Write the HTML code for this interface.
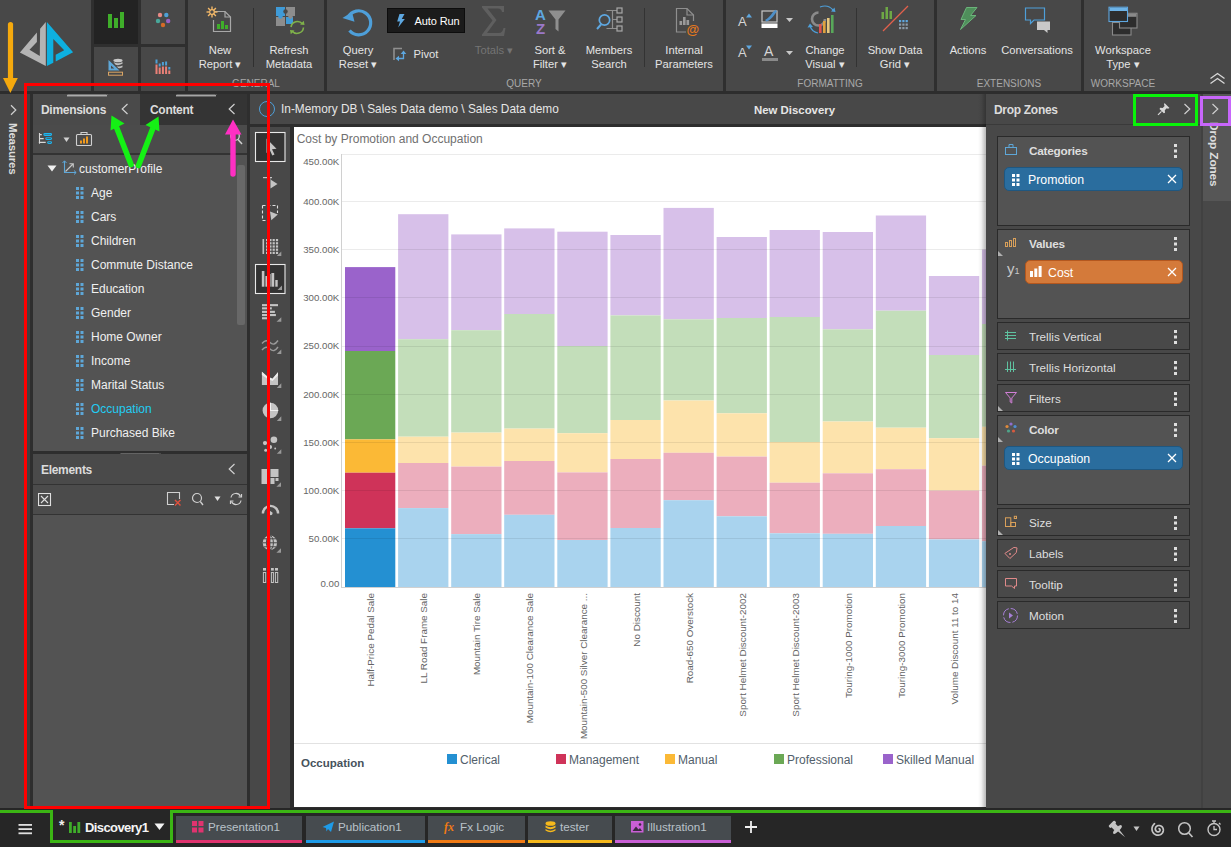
<!DOCTYPE html>
<html><head><meta charset="utf-8"><title>Discovery</title>
<style>
*{box-sizing:border-box;margin:0;padding:0}
html,body{width:1231px;height:847px;overflow:hidden;background:#2e2e2e;font-family:"Liberation Sans",sans-serif;color:#e6e6e6}
.abs{position:absolute}
#ribbon{position:absolute;left:0;top:0;width:1231px;height:91px;background:#484848}
.vsep{position:absolute;top:0;height:91px;width:3px;background:#2f2f2f}
.tile{position:absolute;width:44px;height:44px;background:#484848}
.rl{position:absolute;font-size:11.200px;line-height:14px;color:#e4e4e4;text-align:center;white-space:nowrap;transform:translateX(-50%)}
.grp{position:absolute;top:78px;font-size:10px;color:#a9a9a9;transform:translateX(-50%);white-space:nowrap}
.hdr{position:absolute;top:94px;height:30px;background:#484848}
.ptitle{position:absolute;font-weight:bold;font-size:12px;letter-spacing:-.3px;color:#dcdcdc;white-space:nowrap}
.tree{position:absolute;font-size:12px;color:#f0f0f0;white-space:nowrap}
.dz{position:absolute;left:997px;width:193px;background:#484848;border:1px solid #2a2a2a}
.dzt{position:absolute;left:31px;top:7px;font-size:11.700px;color:#dedede;white-space:nowrap}
.dzt.b{font-weight:bold;font-size:11.800px;letter-spacing:-.25px;top:7px}
.dots{position:absolute;right:12px;top:6.500px;width:3px;height:15px}
.chip{position:absolute;left:6px;width:179px;height:24px;border-radius:5px;font-size:12.300px;color:#fff;line-height:24px;padding-left:23px}
.tab{position:absolute;top:816px;height:27px;background:#464b4f;font-size:13px;color:#b9c2c9;line-height:22px;white-space:nowrap}
</style></head><body>
<!--RIBBON-->
<div id="ribbon">
 <!-- logo -->
 <svg class="abs" style="left:0;top:0" width="91" height="91" viewBox="0 0 91 91">
  <path d="M45.8 22.1 L40.1 28.7 L39.8 56.1 L29.5 49.7 L36.9 41.9 L36.9 32.5 L19.9 52.6 L45.8 66 Z" fill="#b4b4b4"/>
  <path d="M46.9 22.1 L73.1 52.2 L55.7 61.4 L55.7 54.7 L64.2 50.2 L53.3 39 L53.3 62.7 L46.9 66 Z" fill="#0eb0e0"/>
 </svg>
 <div class="vsep" style="left:91px"></div>
 <div class="vsep" style="left:138px"></div>
 <div class="vsep" style="left:185px"></div>
 <div class="abs" style="left:91px;top:44px;width:97px;height:3px;background:#2f2f2f"></div>
 <div class="tile" style="left:94px;top:0;background:#232323"></div>
 <!-- tile icons -->
 <svg class="abs" style="left:94px;top:0" width="44" height="44"><rect x="14" y="14" width="4" height="14" fill="#3fae2a"/><rect x="20" y="18" width="4" height="10" fill="#3fae2a"/><rect x="26" y="12" width="4" height="16" fill="#3fae2a"/></svg>
 <svg class="abs" style="left:141px;top:0" width="44" height="44"><circle cx="19" cy="15" r="2.2" fill="#e88a85"/><circle cx="25.3" cy="15" r="2.2" fill="#4ea0d6"/><circle cx="17" cy="21" r="2.2" fill="#49a89b"/><circle cx="27.2" cy="21" r="2.2" fill="#9a5fc4"/><circle cx="22" cy="25" r="2.2" fill="#d66a28"/></svg>
 <svg class="abs" style="left:94px;top:47px" width="44" height="44"><path d="M14.5 13 L14.5 23.5 L25.5 23.5 Z M17 18.5 L17 21.5 L20.3 21.5 Z" fill="#5ea7d8" fill-rule="evenodd"/><ellipse cx="24" cy="13.5" rx="4.6" ry="1.8" fill="#c9c9c9"/><path d="M19.5 15 Q24 17.5 28.5 15 L28.5 16.7 Q24 19 21.3 17.6 Z M22.5 19 Q25 20.3 28.5 18.4 L28.5 20.2 Q26 21.5 24.2 21 Z" fill="#bdbdbd"/><rect x="14.5" y="25.2" width="14" height="3" fill="none" stroke="#d9a566" stroke-width="1"/></svg>
 <svg class="abs" style="left:141px;top:47px" width="44" height="44"><g fill="#4ea0d6"><rect x="14.5" y="12.5" width="2" height="4"/><rect x="17.7" y="16.5" width="2" height="3"/><rect x="20.9" y="15" width="2" height="3.5"/><rect x="24.1" y="14.5" width="2" height="4"/><rect x="27.3" y="20" width="2" height="2.5"/></g><g fill="#ea8077"><rect x="14.5" y="17.5" width="2" height="9.5"/><rect x="17.7" y="20.5" width="2" height="6.5"/><rect x="20.9" y="19.5" width="2" height="7.5"/><rect x="24.1" y="19.5" width="2" height="7.5"/><rect x="27.3" y="23.5" width="2" height="3.5"/></g></svg>

 <!-- GENERAL -->
 <svg class="abs" style="left:204px;top:4px" width="32" height="32" viewBox="0 0 32 32"><path d="M10.5 7.5 L21 7.5 L26.5 13 L26.5 27.5 L9.5 27.5 L9.5 16" fill="none" stroke="#a8a8a8" stroke-width="1.2"/><path d="M21 7.5 L21 13 L26.5 13" fill="none" stroke="#a8a8a8" stroke-width="1.2"/><rect x="13" y="20" width="3" height="5" fill="#3fae2a"/><rect x="17" y="17" width="3" height="8" fill="#3fae2a"/><rect x="21" y="21" width="3" height="4" fill="#3fae2a"/><g stroke="#f3b868" stroke-width="1.400"><line x1="8" y1="2.5" x2="8" y2="13.5"/><line x1="2.5" y1="8" x2="13.5" y2="8"/><line x1="4.1" y1="4.1" x2="11.9" y2="11.9"/><line x1="11.9" y1="4.1" x2="4.1" y2="11.9"/></g><circle cx="8" cy="8" r="2.3" fill="#484848" stroke="#f3b868" stroke-width="1.200"/></svg>
 <div class="rl" style="left:220px;top:43px">New<br>Report ▾</div>
 <div class="abs" style="left:253px;top:8px;width:1px;height:59px;background:#303030"></div>
 <svg class="abs" style="left:274px;top:5px" width="32" height="32" viewBox="0 0 32 32"><rect x="2" y="2" width="9" height="9" fill="#3f9bd8"/><rect x="12" y="2" width="9" height="9" fill="#8d8d8d"/><rect x="2" y="12" width="9" height="9" fill="#8d8d8d"/><rect x="12" y="12" width="7" height="7" fill="#3f9bd8"/><circle cx="11.5" cy="6.5" r="2.2" fill="#484848"/><circle cx="6.5" cy="11.5" r="2.2" fill="#3f9bd8"/><circle cx="16.5" cy="11.5" r="2.2" fill="#8d8d8d"/><path d="M17 22 A6.5 6.5 0 0 1 28.5 19" fill="none" stroke="#7fb24a" stroke-width="1.6"/><path d="M29.5 22.5 A6.5 6.5 0 0 1 18 26" fill="none" stroke="#7fb24a" stroke-width="1.6"/><path d="M26 19.5 L30.5 20 L29.8 15.8 Z" fill="#7fb24a"/><path d="M20.5 25.5 L16 25 L16.8 29.2 Z" fill="#7fb24a"/></svg>
 <div class="rl" style="left:289px;top:43px">Refresh<br>Metadata</div>
 <div class="grp" style="left:256px">GENERAL</div>
 <div class="vsep" style="left:324px"></div>

 <!-- QUERY -->
 <svg class="abs" style="left:340px;top:3px" width="38" height="38" viewBox="0 0 38 38"><path d="M8.200 14 A12 12 0 1 1 9.500 27.500" fill="none" stroke="#4e9fd9" stroke-width="3.200"/><path d="M2.500 15 L14.500 18.800 L12 9 Z" fill="#4e9fd9"/></svg>
 <div class="rl" style="left:358px;top:43px">Query<br>Reset ▾</div>
 <div class="abs" style="left:387px;top:8px;width:78px;height:25px;background:#1b1b1b;border:1px solid #0d0d0d"></div>
 <svg class="abs" style="left:396px;top:14px" width="10" height="14"><path d="M3.500 0 L8.500 0 L5.800 5 L8.800 5 L2.200 13.500 L4 7.500 L1.200 7.500 Z" fill="#5da7e0"/></svg>
 <div class="abs" style="left:414.500px;top:14.500px;font-size:11px;color:#fff;white-space:nowrap;letter-spacing:-.1px">Auto Run</div>
 <svg class="abs" style="left:392px;top:46px" width="16" height="16"><path d="M2 14 V2.5 H10" fill="none" stroke="#8f8f8f" stroke-width="1.6"/><path d="M6 12.5 H11.5 V7" fill="none" stroke="#5da7e0" stroke-width="1.3"/><path d="M8.7 8 L11.5 4.5 L14.3 8 Z" fill="#5da7e0"/><path d="M7 9.7 L3.5 12.5 L7 15.3 Z" fill="#5da7e0"/></svg>
 <div class="abs" style="left:413.500px;top:47.500px;font-size:11.200px;color:#e4e4e4">Pivot</div>
 <svg class="abs" style="left:478px;top:4px" width="32" height="34"><path d="M4 2 H26 V8 H24 Q23.5 4.5 20 4.5 H9.5 L18.5 16 L9 29 H21 Q24.5 29 25.5 24 H27.5 L26 32 H4 V30.5 L14.5 16.5 L4 3.5 Z" fill="#5f5f5f"/></svg>
 <div class="rl" style="left:494px;top:43px;color:#747474">Totals ▾</div>
 <svg class="abs" style="left:532px;top:4px" width="36" height="34"><text x="3" y="16" font-family="Liberation Sans" font-weight="bold" font-size="15" fill="#5ea7e0">A</text><text x="4" y="30" font-family="Liberation Sans" font-weight="bold" font-size="15" fill="#9a78c8">Z</text><path d="M16.500 6.500 H33.500 L26.500 15.500 V27.500 L23.500 25 V15.500 Z" fill="#8f8f8f"/></svg>
 <div class="rl" style="left:550px;top:43px">Sort &amp;<br>Filter ▾</div>
 <svg class="abs" style="left:594px;top:4px" width="32" height="32"><circle cx="10.500" cy="16" r="5.200" fill="none" stroke="#5ea7e0" stroke-width="1.700"/><line x1="7" y1="20.500" x2="3" y2="25" stroke="#5ea7e0" stroke-width="2"/><path d="M12.500 6.500 H23 M18.500 6.500 V24.500 M12.500 24.500 H23 M18.500 15.500 H23" fill="none" stroke="#8f8f8f" stroke-width="1.200"/><rect x="23" y="4" width="5" height="5" fill="#484848" stroke="#a8a8a8" stroke-width="1.200"/><rect x="23" y="13" width="5" height="5" fill="#484848" stroke="#a8a8a8" stroke-width="1.200"/><rect x="23" y="22" width="5" height="5" fill="#484848" stroke="#a8a8a8" stroke-width="1.200"/></svg>
 <div class="rl" style="left:609px;top:43px">Members<br>Search</div>
 <div class="abs" style="left:644px;top:8px;width:1px;height:59px;background:#333"></div>
 <svg class="abs" style="left:668px;top:4px" width="34" height="34"><path d="M18 28 H8.5 V4.5 H19 L25.5 11 V17" fill="none" stroke="#8f8f8f" stroke-width="1.2"/><path d="M19 4.5 V11 H25.5" fill="none" stroke="#8f8f8f" stroke-width="1.2"/><rect x="11.5" y="17" width="2.6" height="4" fill="#9a9a9a"/><rect x="15" y="13" width="2.6" height="8" fill="#9a9a9a"/><rect x="18.5" y="16" width="2.6" height="5" fill="#9a9a9a"/><text x="18.5" y="30" font-family="Liberation Sans" font-weight="bold" font-size="13" fill="#e5791e">@</text></svg>
 <div class="rl" style="left:684px;top:43px">Internal<br>Parameters</div>
 <div class="grp" style="left:524px">QUERY</div>
 <div class="vsep" style="left:723px"></div>

 <!-- FORMATTING -->
 <div class="abs" style="left:738px;top:14px;font-size:13px;color:#d6d6d6">A</div>
 <svg class="abs" style="left:746px;top:13px" width="6" height="5"><path d="M0 4.5 L3 0.5 L6 4.5 Z" fill="#5ea7e0"/></svg>
 <div class="abs" style="left:738px;top:45px;font-size:13px;color:#d6d6d6">A</div>
 <svg class="abs" style="left:746px;top:45px" width="6" height="5"><path d="M0 0.5 L3 4.5 L6 0.5 Z" fill="#5ea7e0"/></svg>
 <svg class="abs" style="left:761px;top:9px" width="18" height="20"><rect x="1" y="2" width="15" height="11" fill="none" stroke="#c8c8c8" stroke-width="1.2"/><path d="M4 11 Q8 9 12 3 L14.5 0.8 L16 2.2 L14 5 Q10 11 5.5 12.5 Z" fill="#4e8fc7"/><rect x="0.5" y="14.5" width="16" height="4.5" fill="#fff"/></svg>
 <svg class="abs" style="left:786px;top:18px" width="8" height="5"><path d="M0 0 L7 0 L3.5 4 Z" fill="#c8c8c8"/></svg>
 <div class="abs" style="left:764px;top:43px;font-size:14px;color:#d6d6d6">A</div>
 <div class="abs" style="left:762px;top:58px;width:16px;height:3px;background:#8a8a8a"></div>
 <svg class="abs" style="left:786px;top:51px" width="8" height="5"><path d="M0 0 L7 0 L3.5 4 Z" fill="#c8c8c8"/></svg>
 <svg class="abs" style="left:806px;top:4px" width="36" height="34"><path d="M12.5 8.5 A6.5 6.5 0 1 0 19 15" fill="none" stroke="#8a8a8a" stroke-width="2.6"/><path d="M14 3 Q22 0 27 6" fill="none" stroke="#4e9fd9" stroke-width="1.2"/><path d="M25 7.5 L29.5 8 L28.5 3.5 Z" fill="#4e9fd9"/><path d="M4 22 Q6 28 12 29" fill="none" stroke="#4e9fd9" stroke-width="1.2"/><path d="M1.5 23.5 L4 19.5 L7 23 Z" fill="#4e9fd9"/><rect x="13" y="20" width="2.6" height="9" fill="#e0524f"/><rect x="17" y="17" width="2.6" height="12" fill="#e0a23e"/><rect x="21" y="14" width="2.6" height="15" fill="#e8c77d"/><rect x="25" y="11" width="2.6" height="18" fill="#58a85a"/></svg>
 <div class="rl" style="left:825px;top:43px">Change<br>Visual ▾</div>
 <div class="abs" style="left:856px;top:8px;width:1px;height:59px;background:#333"></div>
 <svg class="abs" style="left:878px;top:4px" width="36" height="32"><rect x="3.5" y="8" width="2.5" height="7" fill="#6ea845"/><rect x="7.5" y="3" width="2.5" height="12" fill="#6ea845"/><rect x="11.5" y="7" width="2.5" height="8" fill="#6ea845"/><line x1="5" y1="27" x2="30" y2="2" stroke="#e2604c" stroke-width="1.2"/><g fill="#8a9aa8"><rect x="21" y="16" width="2.2" height="2.2" fill="#5ea7e0"/><rect x="24.3" y="16" width="2.2" height="2.2" fill="#5ea7e0"/><rect x="27.6" y="16" width="2.2" height="2.2" fill="#5ea7e0"/><rect x="21" y="19.5" width="2.2" height="2.2"/><rect x="24.3" y="19.5" width="2.2" height="2.2"/><rect x="27.6" y="19.5" width="2.2" height="2.2"/><rect x="21" y="23" width="2.2" height="2.2"/><rect x="24.3" y="23" width="2.2" height="2.2"/><rect x="27.6" y="23" width="2.2" height="2.2"/></g></svg>
 <div class="rl" style="left:895px;top:43px">Show Data<br>Grid ▾</div>
 <div class="grp" style="left:830px">FORMATTING</div>
 <div class="vsep" style="left:934px"></div>

 <!-- EXTENSIONS -->
 <svg class="abs" style="left:956px;top:4px" width="26" height="30"><path d="M10.5 3.5 L21 3.5 L14.5 11.5 L20 11.5 L4.5 25.5 L9.5 15.5 L5 15.5 Z" fill="#4f8f5b" stroke="#6bb47a" stroke-width="1"/></svg>
 <div class="rl" style="left:968px;top:43px">Actions</div>
 <svg class="abs" style="left:1022px;top:4px" width="32" height="30"><path d="M3.5 4 H22.500 V16 H12 L8.5 19.500 V16 H3.500 Z" fill="none" stroke="#4e9fd9" stroke-width="1.2"/><path d="M15 17.5 H28 V26 H25.5 V29 L22 26 H15 Z" fill="#c9c9c9"/></svg>
 <div class="rl" style="left:1037px;top:43px">Conversations</div>
 <div class="grp" style="left:1009px">EXTENSIONS</div>
 <div class="vsep" style="left:1081px"></div>

 <!-- WORKSPACE -->
 <svg class="abs" style="left:1106px;top:4px" width="34" height="34"><rect x="6.500" y="18.500" width="18.500" height="12.500" fill="#2d2d2d" stroke="#8a8a8a" stroke-width="1.100"/><rect x="13.500" y="9.300" width="17.500" height="14.700" fill="#2d2d2d" stroke="#8a8a8a" stroke-width="1.100"/><rect x="14" y="9.800" width="16.500" height="3" fill="#8a8a8a"/><rect x="3" y="3.200" width="18.500" height="14.300" fill="#2d2d2d" stroke="#5ea7e0" stroke-width="1.100"/><rect x="3.500" y="3.700" width="17.500" height="3.300" fill="#6db3e6"/></svg>
 <div class="rl" style="left:1123px;top:43px">Workspace<br>Type ▾</div>
 <div class="grp" style="left:1123px">WORKSPACE</div>
 <svg class="abs" style="left:1209px;top:72px" width="18" height="14"><path d="M1.5 6.500 L8.500 1.500 L15.500 6.500 M1.500 11.500 L8.500 6.500 L15.500 11.500" fill="none" stroke="#d8d8d8" stroke-width="1.3"/></svg>
</div>

<!--HEADER-->
<!-- ribbon bottom dark line -->
<div class="abs" style="left:0;top:91px;width:1231px;height:3px;background:#2d2d2d"></div>
<!-- Measures strip -->
<div class="abs" style="left:0;top:94px;width:27px;height:714px;background:#484848"></div>
<div class="abs" style="left:27px;top:94px;width:3px;height:714px;background:#404040"></div>
<div class="abs" style="left:30px;top:94px;width:3px;height:714px;background:#2e2e2e"></div>
<svg class="abs" style="left:8px;top:103px" width="10" height="14"><path d="M3 2.300 L7.800 7 L3 11.700" fill="none" stroke="#d0d0d0" stroke-width="1.2"/></svg>
<div class="abs" style="left:19px;top:123px;font-size:11.500px;font-weight:bold;color:#dcdcdc;transform-origin:0 0;transform:rotate(90deg);white-space:nowrap;letter-spacing:-.2px">Measures</div>
<!-- Left panel -->
<div class="abs" style="left:33px;top:94px;width:214px;height:31px;background:#4a4a4a"></div>
<div class="abs" style="left:140px;top:94px;width:107px;height:31px;background:#343434"></div>
<div class="abs" style="left:33px;top:125px;width:214px;height:29px;background:#4b4b4b"></div>
<div class="abs" style="left:33px;top:153px;width:214px;height:2px;background:#333"></div>
<div class="abs" style="left:33px;top:155px;width:214px;height:296px;background:#535353"></div>
<div class="abs" style="left:237px;top:165px;width:8px;height:160px;background:#686868;border-radius:2px"></div>
<div class="ptitle" style="left:41px;top:103px">Dimensions</div>
<div class="ptitle" style="left:150px;top:103px">Content</div>
<svg class="abs" style="left:120px;top:102px" width="10" height="14"><path d="M7.500 2 L2.200 7 L7.500 12" fill="none" stroke="#d0d0d0" stroke-width="1.2"/></svg>
<svg class="abs" style="left:227px;top:102px" width="10" height="14"><path d="M7.500 2 L2.200 7 L7.500 12" fill="none" stroke="#d0d0d0" stroke-width="1.2"/></svg>
<!-- grip marks -->
<svg class="abs" style="left:67px;top:94px" width="41" height="3"><path d="M0 0.500 L1 2.500 L2 0.500 L3 2.500 L4 0.500 L5 2.500 L6 0.500 L7 2.500 L8 0.500 L9 2.500 L10 0.500 L11 2.500 L12 0.500 L13 2.500 L14 0.500 L15 2.500 L16 0.500 L17 2.500 L18 0.500 L19 2.500 L20 0.500 L21 2.500 L22 0.500 L23 2.500 L24 0.500 L25 2.500 L26 0.500 L27 2.500 L28 0.500 L29 2.500 L30 0.500 L31 2.500 L32 0.500 L33 2.500 L34 0.500 L35 2.500 L36 0.500 L37 2.500 L38 0.500 L39 2.500 L40 0.500" fill="none" stroke="#c4c4c4" stroke-width=".800"/></svg>
<svg class="abs" style="left:176px;top:94px" width="41" height="3"><path d="M0 0.500 L1 2.500 L2 0.500 L3 2.500 L4 0.500 L5 2.500 L6 0.500 L7 2.500 L8 0.500 L9 2.500 L10 0.500 L11 2.500 L12 0.500 L13 2.500 L14 0.500 L15 2.500 L16 0.500 L17 2.500 L18 0.500 L19 2.500 L20 0.500 L21 2.500 L22 0.500 L23 2.500 L24 0.500 L25 2.500 L26 0.500 L27 2.500 L28 0.500 L29 2.500 L30 0.500 L31 2.500 L32 0.500 L33 2.500 L34 0.500 L35 2.500 L36 0.500 L37 2.500 L38 0.500 L39 2.500 L40 0.500" fill="none" stroke="#c4c4c4" stroke-width=".800"/></svg>
<!-- toolbar icons -->
<svg class="abs" style="left:38px;top:131px" width="18" height="16"><path d="M1.500 2.100 V12.800 M1.500 3.600 H3.800 M1.500 7.600 H5.700 M0.800 11.400 H7.700" fill="none" stroke="#d8d8d8" stroke-width="1.100"/><rect x="5.900" y="2.600" width="7.600" height="1.800" rx=".9" fill="none" stroke="#19b8f5" stroke-width="1.100"/><rect x="7.800" y="6.700" width="5.700" height="1.800" rx=".9" fill="none" stroke="#19b8f5" stroke-width="1.100"/><rect x="9.700" y="10.700" width="3.800" height="1.800" rx=".9" fill="none" stroke="#19b8f5" stroke-width="1.100"/></svg>
<svg class="abs" style="left:62.500px;top:137px" width="8" height="6"><path d="M0.500 0.500 H6.500 L3.500 5 Z" fill="#d0d0d0"/></svg>
<svg class="abs" style="left:75px;top:130px" width="18" height="17"><rect x="1.500" y="4.500" width="15" height="11" rx="1" fill="none" stroke="#d0d0d0" stroke-width="1.100"/><path d="M6 4.500 V2.500 H12 V4.500" fill="none" stroke="#d0d0d0" stroke-width="1.100"/><rect x="5" y="10.500" width="2" height="3" fill="#f09a1e"/><rect x="8" y="8.500" width="2" height="5" fill="#f09a1e"/><rect x="11" y="6.500" width="2" height="7" fill="#f09a1e"/></svg>
<svg class="abs" style="left:229px;top:130px" width="16" height="16"><circle cx="6" cy="6" r="4.300" fill="none" stroke="#d0d0d0" stroke-width="1.300"/><line x1="9" y1="9.500" x2="13" y2="14" stroke="#d0d0d0" stroke-width="1.500"/></svg>
<!-- tree -->
<svg class="abs" style="left:47px;top:165px" width="10" height="8"><path d="M0.500 0.500 H9.500 L5 6.500 Z" fill="#f0f0f0"/></svg>
<svg class="abs" style="left:61px;top:160px" width="16" height="16"><path d="M3.500 1 V12.500 H15" fill="none" stroke="#5ea7d8" stroke-width="1.100"/><path d="M1.500 3 L3.500 0.800 L5.500 3 M13 10.500 L15.200 12.500 L13 14.500" fill="none" stroke="#5ea7d8" stroke-width="1"/><path d="M4.500 11.500 L12 4 M8.500 3.700 H12.300 V7.500" fill="none" stroke="#c8c8c8" stroke-width="1.100"/></svg>
<div class="tree" style="left:79px;top:161.500px">customerProfile</div>
<svg class="abs" style="left:76px;top:187px" width="8" height="12"><g fill="#5ea7d8"><rect x="0" y="0" width="3" height="3"/><rect x="4.500" y="0" width="3" height="3"/><rect x="0" y="4.500" width="3" height="3"/><rect x="4.500" y="4.500" width="3" height="3"/><rect x="0" y="9" width="3" height="3"/><rect x="4.500" y="9" width="3" height="3"/></g></svg>
<div class="tree" style="left:91px;top:186px">Age</div>
<svg class="abs" style="left:76px;top:211px" width="8" height="12"><g fill="#5ea7d8"><rect x="0" y="0" width="3" height="3"/><rect x="4.500" y="0" width="3" height="3"/><rect x="0" y="4.500" width="3" height="3"/><rect x="4.500" y="4.500" width="3" height="3"/><rect x="0" y="9" width="3" height="3"/><rect x="4.500" y="9" width="3" height="3"/></g></svg>
<div class="tree" style="left:91px;top:210px">Cars</div>
<svg class="abs" style="left:76px;top:235px" width="8" height="12"><g fill="#5ea7d8"><rect x="0" y="0" width="3" height="3"/><rect x="4.500" y="0" width="3" height="3"/><rect x="0" y="4.500" width="3" height="3"/><rect x="4.500" y="4.500" width="3" height="3"/><rect x="0" y="9" width="3" height="3"/><rect x="4.500" y="9" width="3" height="3"/></g></svg>
<div class="tree" style="left:91px;top:234px">Children</div>
<svg class="abs" style="left:76px;top:259px" width="8" height="12"><g fill="#5ea7d8"><rect x="0" y="0" width="3" height="3"/><rect x="4.500" y="0" width="3" height="3"/><rect x="0" y="4.500" width="3" height="3"/><rect x="4.500" y="4.500" width="3" height="3"/><rect x="0" y="9" width="3" height="3"/><rect x="4.500" y="9" width="3" height="3"/></g></svg>
<div class="tree" style="left:91px;top:258px">Commute Distance</div>
<svg class="abs" style="left:76px;top:283px" width="8" height="12"><g fill="#5ea7d8"><rect x="0" y="0" width="3" height="3"/><rect x="4.500" y="0" width="3" height="3"/><rect x="0" y="4.500" width="3" height="3"/><rect x="4.500" y="4.500" width="3" height="3"/><rect x="0" y="9" width="3" height="3"/><rect x="4.500" y="9" width="3" height="3"/></g></svg>
<div class="tree" style="left:91px;top:282px">Education</div>
<svg class="abs" style="left:76px;top:307px" width="8" height="12"><g fill="#5ea7d8"><rect x="0" y="0" width="3" height="3"/><rect x="4.500" y="0" width="3" height="3"/><rect x="0" y="4.500" width="3" height="3"/><rect x="4.500" y="4.500" width="3" height="3"/><rect x="0" y="9" width="3" height="3"/><rect x="4.500" y="9" width="3" height="3"/></g></svg>
<div class="tree" style="left:91px;top:306px">Gender</div>
<svg class="abs" style="left:76px;top:331px" width="8" height="12"><g fill="#5ea7d8"><rect x="0" y="0" width="3" height="3"/><rect x="4.500" y="0" width="3" height="3"/><rect x="0" y="4.500" width="3" height="3"/><rect x="4.500" y="4.500" width="3" height="3"/><rect x="0" y="9" width="3" height="3"/><rect x="4.500" y="9" width="3" height="3"/></g></svg>
<div class="tree" style="left:91px;top:330px">Home Owner</div>
<svg class="abs" style="left:76px;top:355px" width="8" height="12"><g fill="#5ea7d8"><rect x="0" y="0" width="3" height="3"/><rect x="4.500" y="0" width="3" height="3"/><rect x="0" y="4.500" width="3" height="3"/><rect x="4.500" y="4.500" width="3" height="3"/><rect x="0" y="9" width="3" height="3"/><rect x="4.500" y="9" width="3" height="3"/></g></svg>
<div class="tree" style="left:91px;top:354px">Income</div>
<svg class="abs" style="left:76px;top:379px" width="8" height="12"><g fill="#5ea7d8"><rect x="0" y="0" width="3" height="3"/><rect x="4.500" y="0" width="3" height="3"/><rect x="0" y="4.500" width="3" height="3"/><rect x="4.500" y="4.500" width="3" height="3"/><rect x="0" y="9" width="3" height="3"/><rect x="4.500" y="9" width="3" height="3"/></g></svg>
<div class="tree" style="left:91px;top:378px">Marital Status</div>
<svg class="abs" style="left:76px;top:403px" width="8" height="12"><g fill="#5ea7d8"><rect x="0" y="0" width="3" height="3"/><rect x="4.500" y="0" width="3" height="3"/><rect x="0" y="4.500" width="3" height="3"/><rect x="4.500" y="4.500" width="3" height="3"/><rect x="0" y="9" width="3" height="3"/><rect x="4.500" y="9" width="3" height="3"/></g></svg>
<div class="tree" style="left:91px;top:402px;color:#22ccf2">Occupation</div>
<svg class="abs" style="left:76px;top:427px" width="8" height="12"><g fill="#5ea7d8"><rect x="0" y="0" width="3" height="3"/><rect x="4.500" y="0" width="3" height="3"/><rect x="0" y="4.500" width="3" height="3"/><rect x="4.500" y="4.500" width="3" height="3"/><rect x="0" y="9" width="3" height="3"/><rect x="4.500" y="9" width="3" height="3"/></g></svg>
<div class="tree" style="left:91px;top:426px">Purchased Bike</div>
<!-- Elements -->
<div class="abs" style="left:33px;top:451px;width:214px;height:3px;background:#2e2e2e"></div>
<svg class="abs" style="left:120px;top:453px" width="41" height="3"><path d="M0 0.500 L1 2.500 L2 0.500 L3 2.500 L4 0.500 L5 2.500 L6 0.500 L7 2.500 L8 0.500 L9 2.500 L10 0.500 L11 2.500 L12 0.500 L13 2.500 L14 0.500 L15 2.500 L16 0.500 L17 2.500 L18 0.500 L19 2.500 L20 0.500 L21 2.500 L22 0.500 L23 2.500 L24 0.500 L25 2.500 L26 0.500 L27 2.500 L28 0.500 L29 2.500 L30 0.500 L31 2.500 L32 0.500 L33 2.500 L34 0.500 L35 2.500 L36 0.500 L37 2.500 L38 0.500 L39 2.500 L40 0.500" fill="none" stroke="#c4c4c4" stroke-width=".800"/></svg>
<div class="abs" style="left:33px;top:454px;width:214px;height:30px;background:#4a4a4a"></div>
<div class="abs" style="left:33px;top:484px;width:214px;height:1px;background:#333"></div>
<div class="abs" style="left:33px;top:485px;width:214px;height:29px;background:#4b4b4b"></div>
<div class="abs" style="left:33px;top:514px;width:214px;height:1px;background:#333"></div>
<div class="abs" style="left:33px;top:515px;width:214px;height:293px;background:#535353"></div>
<div class="ptitle" style="left:41px;top:463px">Elements</div>
<svg class="abs" style="left:227px;top:462px" width="10" height="14"><path d="M7.500 2 L2.200 7 L7.500 12" fill="none" stroke="#d0d0d0" stroke-width="1.200"/></svg>
<svg class="abs" style="left:38px;top:493px" width="14" height="14"><rect x="0.500" y="0.500" width="12" height="12" fill="none" stroke="#e0e0e0" stroke-width="1.100"/><path d="M3 3 L10 10 M10 3 L3 10" stroke="#e0e0e0" stroke-width="1.100"/></svg>
<svg class="abs" style="left:166px;top:491px" width="16" height="16"><path d="M8 13.500 H1.500 V1.500 H13.500 V8" fill="none" stroke="#d0d0d0" stroke-width="1.100"/><path d="M9 9 L14.500 14.500 M14.500 9 L9 14.500" stroke="#e2503c" stroke-width="1.400"/></svg>
<svg class="abs" style="left:191px;top:492px" width="14" height="14"><circle cx="6" cy="6" r="4.500" fill="none" stroke="#d0d0d0" stroke-width="1.200"/><line x1="9.300" y1="9.500" x2="12" y2="13" stroke="#d0d0d0" stroke-width="1.300"/></svg>
<svg class="abs" style="left:214px;top:496px" width="8" height="6"><path d="M0.500 0.500 H6.500 L3.500 5 Z" fill="#e0e0e0"/></svg>
<svg class="abs" style="left:229px;top:492px" width="14" height="14"><path d="M2 5.500 A5 5 0 0 1 11.500 4.500 M12 8.500 A5 5 0 0 1 2.500 9.500" fill="none" stroke="#d0d0d0" stroke-width="1.200"/><path d="M9.500 5 H12.500 V2" fill="none" stroke="#d0d0d0" stroke-width="1.200"/><path d="M4.500 9 H1.500 V12" fill="none" stroke="#d0d0d0" stroke-width="1.200"/></svg>
<!-- gap between left panel and tools -->
<div class="abs" style="left:247px;top:94px;width:3px;height:714px;background:#2e2e2e"></div>
<!--LEFT-->
<!-- breadcrumb header -->
<div class="abs" style="left:250px;top:94px;width:736px;height:30px;background:#484848"></div>
<div class="abs" style="left:250px;top:124px;width:736px;height:3px;background:#2d2d2d"></div>
<svg class="abs" style="left:258px;top:100px" width="18" height="18"><circle cx="9" cy="9" r="7.500" fill="none" stroke="#4e9fd9" stroke-width="1"/></svg>
<div class="abs" style="left:281px;top:101.500px;font-size:11.850px;color:#e6e6e6;white-space:nowrap">In-Memory DB \ Sales Data demo \ Sales Data demo</div>
<div class="abs" style="left:754px;top:104px;font-size:11.400px;font-weight:bold;color:#e6e6e6;white-space:nowrap">New Discovery</div>
<!-- tools strip -->
<div class="abs" style="left:250px;top:127px;width:40px;height:681px;background:#484848"></div>
<div class="abs" style="left:290px;top:127px;width:4px;height:681px;background:#2d2d2d"></div>
<svg class="abs" style="left:250px;top:127px" width="40" height="470" viewBox="250 127 40 470">
 <g fill="#c4c4c4" stroke="none">
 <!-- pointer -->
 <rect x="255.500" y="132.500" width="29.500" height="29" fill="#333" stroke="#e8e8e8" stroke-width="1.100"/>
 <path d="M266.500 138.500 L266.500 153 L269.800 150 L272.300 155.500 L274.500 154.500 L272 149.200 L276.500 148.800 Z"/>
 <!-- text cursor + arrow -->
 <path d="M263 177 H272 V178.200 H263 Z"/><path d="M270.500 179.500 L277.500 184 L270.500 188.500 Z"/><path d="M269.700 178 V188 H270.700 V178 Z" fill="#8a8a8a"/>
 <!-- dashed rect + arrow -->
 <path d="M262.500 205.500 H277.500 V213 M262.500 205.500 V220.500 H270" fill="none" stroke="#e0e0e0" stroke-width="1.100" stroke-dasharray="3 2"/>
 <path d="M270 211.500 L277.800 214.500 L271.300 220.300 Z"/>
 <!-- grid -->
 <g><rect x="262.500" y="239" width="1.600" height="15"/>
 <rect x="266.0" y="239.0" width="2.200" height="2.200"/><rect x="269.3" y="239.0" width="2.200" height="2.200"/><rect x="272.6" y="239.0" width="2.200" height="2.200"/><rect x="275.9" y="239.0" width="2.200" height="2.200"/><rect x="266.0" y="242.2" width="2.200" height="2.200"/><rect x="269.3" y="242.2" width="2.200" height="2.200"/><rect x="272.6" y="242.2" width="2.200" height="2.200"/><rect x="275.9" y="242.2" width="2.200" height="2.200"/><rect x="266.0" y="245.4" width="2.200" height="2.200"/><rect x="269.3" y="245.4" width="2.200" height="2.200"/><rect x="272.6" y="245.4" width="2.200" height="2.200"/><rect x="275.9" y="245.4" width="2.200" height="2.200"/><rect x="266.0" y="248.6" width="2.200" height="2.200"/><rect x="269.3" y="248.6" width="2.200" height="2.200"/><rect x="272.6" y="248.6" width="2.200" height="2.200"/><rect x="275.9" y="248.6" width="2.200" height="2.200"/><rect x="266.0" y="251.8" width="2.200" height="2.200"/><rect x="269.3" y="251.8" width="2.200" height="2.200"/><rect x="272.6" y="251.8" width="2.200" height="2.200"/><rect x="275.9" y="251.8" width="2.200" height="2.200"/>
 <path d="M281.300 251.500 V256 H276.800 Z" fill="#9a9a9a"/></g>
 <!-- bars selected -->
 <rect x="255.500" y="264.500" width="29.500" height="29" fill="#333" stroke="#e8e8e8" stroke-width="1.100"/>
 <rect x="261.800" y="271" width="2.600" height="15.700"/><rect x="265.400" y="276" width="2.200" height="10.700"/><rect x="268.400" y="274" width="2.200" height="12.700"/><rect x="271.400" y="273" width="2.800" height="13.700"/><rect x="275.300" y="280" width="2.400" height="6.700"/><path d="M282 285.500 V290 H277.500 Z" fill="#9a9a9a"/>
 <!-- horizontal bars -->
 <rect x="262" y="304.100" width="16" height="2.100"/><rect x="262" y="307.300" width="9.800" height="2.100"/><rect x="262" y="310.800" width="12.900" height="2.100"/><rect x="262" y="314" width="13.900" height="2.100"/><rect x="262" y="317.200" width="5.100" height="2.100"/><path d="M281.300 317.200 V321.700 H276.500 Z" fill="#9a9a9a"/>
 <!-- waves -->
 <path d="M262 343.500 Q266 338.500 270 342.500 T278 340.500 M262 350 Q266 345 270 349 T278 347" fill="none" stroke="#9a9a9a" stroke-width="1.400"/><path d="M281.300 349.500 V354 H276.800 Z" fill="#9a9a9a"/>
 <!-- area -->
 <path d="M261.900 385 V371.800 L267 376.300 L272.500 378.800 L278 372.300 V385 Z"/><path d="M261.900 371.800 L267 376.300 L272.500 378.800 L278 372.300 V375.500 L272.500 381 L267 378.500 L261.900 375 Z" fill="#ececec"/><path d="M281.300 383.300 V387.900 H276.800 Z" fill="#9a9a9a"/>
 <!-- pie -->
 <circle cx="270.400" cy="410.500" r="7.800"/><path d="M270.400 402.700 V410.500 H278.200" fill="none" stroke="#f0f0f0" stroke-width="1.200"/><path d="M281.300 416.300 V420.900 H276.800 Z" fill="#9a9a9a"/>
 <!-- scatter -->
 <circle cx="273.900" cy="439.700" r="3.300"/><circle cx="265" cy="443.100" r="2.100"/><circle cx="270" cy="447" r="2.100"/><circle cx="265.700" cy="450.200" r="1.500"/><circle cx="275.200" cy="448.500" r="0.900"/><path d="M281.300 449.200 V453.700 H276.800 Z" fill="#9a9a9a"/>
 <!-- treemap -->
 <rect x="261.500" y="469" width="8" height="15"/><rect x="270.500" y="469" width="8" height="8"/><rect x="270.500" y="478" width="4" height="6"/><rect x="275.500" y="478" width="3" height="3"/><path d="M281 482.200 V486.800 H276.400 Z" fill="#9a9a9a"/>
 <!-- gauge -->
 <path d="M262.900 513.500 A7.600 7.600 0 0 1 278.100 513.500" fill="none" stroke="#c4c4c4" stroke-width="2.400"/><path d="M270.500 515 L267 509 L272.500 512.500 Z"/><circle cx="270.800" cy="513.600" r="1.700"/>
 <!-- globe -->
 <circle cx="269.900" cy="542.800" r="7.200"/><path d="M262.700 542.800 H277.100 M269.900 535.600 V550 M264 538.800 H276 M264 546.800 H276" stroke="#484848" stroke-width="1"/><ellipse cx="269.900" cy="542.800" rx="3.500" ry="7.200" fill="none" stroke="#484848" stroke-width="1"/><path d="M281 548.200 V552.800 H276.400 Z" fill="#9a9a9a"/>
 <!-- iii -->
 <g fill="none" stroke="#c4c4c4" stroke-width="1"><rect x="263.400" y="572.500" width="2.300" height="10"/><rect x="271.400" y="572.500" width="2" height="10"/><rect x="275.400" y="572.500" width="2.300" height="10"/></g><rect x="263" y="568" width="3" height="2.600"/><rect x="271" y="568" width="2.800" height="2.600"/><rect x="275" y="568" width="3" height="2.600"/>
 </g>
</svg>

<!--TOOLS-->
<!-- chart white -->
<div class="abs" style="left:294px;top:127px;width:692px;height:680px;background:#fff;overflow:hidden">
<svg class="abs" style="left:0;top:0" width="692" height="680" viewBox="294 127 692 680" font-family="Liberation Sans, sans-serif">
<text x="296.700" y="143" font-size="12" fill="#707070">Cost by Promotion and Occupation</text>
<rect x="345.0" y="267.1" width="50.3" height="83.9" fill="#9a63cb"/>
<rect x="345.0" y="351.0" width="50.3" height="88.4" fill="#6ba855"/>
<rect x="345.0" y="439.4" width="50.3" height="33.3" fill="#fbb936"/>
<rect x="345.0" y="472.7" width="50.3" height="55.6" fill="#cf3359"/>
<rect x="345.0" y="528.3" width="50.3" height="58.7" fill="#2490d2"/>
<rect x="398.1" y="214.2" width="50.3" height="125.0" fill="#d7c0e9"/>
<rect x="398.1" y="339.2" width="50.3" height="97.5" fill="#c3deba"/>
<rect x="398.1" y="436.7" width="50.3" height="26.3" fill="#fde3ac"/>
<rect x="398.1" y="463.0" width="50.3" height="45.1" fill="#ecaebd"/>
<rect x="398.1" y="508.1" width="50.3" height="78.9" fill="#a9d3ee"/>
<rect x="451.2" y="234.4" width="50.3" height="95.8" fill="#d7c0e9"/>
<rect x="451.2" y="330.2" width="50.3" height="102.4" fill="#c3deba"/>
<rect x="451.2" y="432.6" width="50.3" height="34.0" fill="#fde3ac"/>
<rect x="451.2" y="466.6" width="50.3" height="67.5" fill="#ecaebd"/>
<rect x="451.2" y="534.1" width="50.3" height="52.9" fill="#a9d3ee"/>
<rect x="504.2" y="228.4" width="50.3" height="85.6" fill="#d7c0e9"/>
<rect x="504.2" y="314.0" width="50.3" height="114.6" fill="#c3deba"/>
<rect x="504.2" y="428.6" width="50.3" height="32.4" fill="#fde3ac"/>
<rect x="504.2" y="461.0" width="50.3" height="53.8" fill="#ecaebd"/>
<rect x="504.2" y="514.8" width="50.3" height="72.2" fill="#a9d3ee"/>
<rect x="557.3" y="231.7" width="50.3" height="114.4" fill="#d7c0e9"/>
<rect x="557.3" y="346.1" width="50.3" height="87.1" fill="#c3deba"/>
<rect x="557.3" y="433.2" width="50.3" height="39.2" fill="#fde3ac"/>
<rect x="557.3" y="472.4" width="50.3" height="67.6" fill="#ecaebd"/>
<rect x="557.3" y="540.0" width="50.3" height="47.0" fill="#a9d3ee"/>
<rect x="610.4" y="235.0" width="50.3" height="80.4" fill="#d7c0e9"/>
<rect x="610.4" y="315.4" width="50.3" height="104.6" fill="#c3deba"/>
<rect x="610.4" y="420.0" width="50.3" height="39.0" fill="#fde3ac"/>
<rect x="610.4" y="459.0" width="50.3" height="69.0" fill="#ecaebd"/>
<rect x="610.4" y="528.0" width="50.3" height="59.0" fill="#a9d3ee"/>
<rect x="663.5" y="207.9" width="50.3" height="111.4" fill="#d7c0e9"/>
<rect x="663.5" y="319.3" width="50.3" height="81.2" fill="#c3deba"/>
<rect x="663.5" y="400.5" width="50.3" height="52.3" fill="#fde3ac"/>
<rect x="663.5" y="452.8" width="50.3" height="47.4" fill="#ecaebd"/>
<rect x="663.5" y="500.2" width="50.3" height="86.8" fill="#a9d3ee"/>
<rect x="716.6" y="237.0" width="50.3" height="81.0" fill="#d7c0e9"/>
<rect x="716.6" y="318.0" width="50.3" height="95.3" fill="#c3deba"/>
<rect x="716.6" y="413.3" width="50.3" height="43.3" fill="#fde3ac"/>
<rect x="716.6" y="456.6" width="50.3" height="59.7" fill="#ecaebd"/>
<rect x="716.6" y="516.3" width="50.3" height="70.7" fill="#a9d3ee"/>
<rect x="769.6" y="230.0" width="50.3" height="87.0" fill="#d7c0e9"/>
<rect x="769.6" y="317.0" width="50.3" height="125.0" fill="#c3deba"/>
<rect x="769.6" y="442.0" width="50.3" height="40.7" fill="#fde3ac"/>
<rect x="769.6" y="482.7" width="50.3" height="50.6" fill="#ecaebd"/>
<rect x="769.6" y="533.3" width="50.3" height="53.7" fill="#a9d3ee"/>
<rect x="822.7" y="232.0" width="50.3" height="97.3" fill="#d7c0e9"/>
<rect x="822.7" y="329.3" width="50.3" height="92.2" fill="#c3deba"/>
<rect x="822.7" y="421.5" width="50.3" height="51.8" fill="#fde3ac"/>
<rect x="822.7" y="473.3" width="50.3" height="60.5" fill="#ecaebd"/>
<rect x="822.7" y="533.8" width="50.3" height="53.2" fill="#a9d3ee"/>
<rect x="875.8" y="215.5" width="50.3" height="95.2" fill="#d7c0e9"/>
<rect x="875.8" y="310.7" width="50.3" height="117.0" fill="#c3deba"/>
<rect x="875.8" y="427.7" width="50.3" height="41.5" fill="#fde3ac"/>
<rect x="875.8" y="469.2" width="50.3" height="56.8" fill="#ecaebd"/>
<rect x="875.8" y="526.0" width="50.3" height="61.0" fill="#a9d3ee"/>
<rect x="928.9" y="276.0" width="50.3" height="79.0" fill="#d7c0e9"/>
<rect x="928.9" y="355.0" width="50.3" height="83.2" fill="#c3deba"/>
<rect x="928.9" y="438.2" width="50.3" height="52.4" fill="#fde3ac"/>
<rect x="928.9" y="490.6" width="50.3" height="48.8" fill="#ecaebd"/>
<rect x="928.9" y="539.4" width="50.3" height="47.6" fill="#a9d3ee"/>
<rect x="982.0" y="249.6" width="50.3" height="74.4" fill="#d7c0e9"/>
<rect x="982.0" y="324.0" width="50.3" height="102.8" fill="#c3deba"/>
<rect x="982.0" y="426.8" width="50.3" height="38.9" fill="#fde3ac"/>
<rect x="982.0" y="465.7" width="50.3" height="75.5" fill="#ecaebd"/>
<rect x="982.0" y="541.2" width="50.3" height="45.8" fill="#a9d3ee"/>
<line x1="342" y1="154.5" x2="986" y2="154.5" stroke="#000" stroke-opacity="0.08" stroke-width="1"/>
<line x1="342" y1="201.5" x2="986" y2="201.5" stroke="#000" stroke-opacity="0.08" stroke-width="1"/>
<line x1="342" y1="249.5" x2="986" y2="249.5" stroke="#000" stroke-opacity="0.08" stroke-width="1"/>
<line x1="342" y1="297.5" x2="986" y2="297.5" stroke="#000" stroke-opacity="0.08" stroke-width="1"/>
<line x1="342" y1="346.5" x2="986" y2="346.5" stroke="#000" stroke-opacity="0.08" stroke-width="1"/>
<line x1="342" y1="394.5" x2="986" y2="394.5" stroke="#000" stroke-opacity="0.08" stroke-width="1"/>
<line x1="342" y1="442.5" x2="986" y2="442.5" stroke="#000" stroke-opacity="0.08" stroke-width="1"/>
<line x1="342" y1="490.5" x2="986" y2="490.5" stroke="#000" stroke-opacity="0.08" stroke-width="1"/>
<line x1="342" y1="538.5" x2="986" y2="538.5" stroke="#000" stroke-opacity="0.08" stroke-width="1"/>
<line x1="342" y1="587.500" x2="986" y2="587.500" stroke="#d0d0d0" stroke-width="1"/>
<line x1="341.500" y1="154" x2="341.500" y2="588" stroke="#d0d0d0" stroke-width="1"/>
<text x="339.300" y="165.2" font-size="9.700" fill="#666" text-anchor="end">450.00K</text>
<text x="339.300" y="204.9" font-size="9.700" fill="#666" text-anchor="end">400.00K</text>
<text x="339.300" y="253.0" font-size="9.700" fill="#666" text-anchor="end">350.00K</text>
<text x="339.300" y="301.2" font-size="9.700" fill="#666" text-anchor="end">300.00K</text>
<text x="339.300" y="349.3" font-size="9.700" fill="#666" text-anchor="end">250.00K</text>
<text x="339.300" y="397.5" font-size="9.700" fill="#666" text-anchor="end">200.00K</text>
<text x="339.300" y="445.6" font-size="9.700" fill="#666" text-anchor="end">150.00K</text>
<text x="339.300" y="493.7" font-size="9.700" fill="#666" text-anchor="end">100.00K</text>
<text x="339.300" y="541.9" font-size="9.700" fill="#666" text-anchor="end">50.00K</text>
<text x="339.300" y="587.2" font-size="9.700" fill="#666" text-anchor="end">0.00</text>
<text transform="translate(374.1,593) rotate(-90)" font-size="9.850" fill="#646464" text-anchor="end">Half-Price Pedal Sale</text>
<text transform="translate(427.2,593) rotate(-90)" font-size="9.850" fill="#646464" text-anchor="end">LL Road Frame Sale</text>
<text transform="translate(480.3,593) rotate(-90)" font-size="9.850" fill="#646464" text-anchor="end">Mountain Tire Sale</text>
<text transform="translate(533.4,593) rotate(-90)" font-size="9.850" fill="#646464" text-anchor="end">Mountain-100 Clearance Sale</text>
<text transform="translate(586.5,593) rotate(-90)" font-size="9.850" fill="#646464" text-anchor="end">Mountain-500 Silver Clearance ...</text>
<text transform="translate(639.5,593) rotate(-90)" font-size="9.850" fill="#646464" text-anchor="end">No Discount</text>
<text transform="translate(692.6,593) rotate(-90)" font-size="9.850" fill="#646464" text-anchor="end">Road-650 Overstock</text>
<text transform="translate(745.7,593) rotate(-90)" font-size="9.850" fill="#646464" text-anchor="end">Sport Helmet Discount-2002</text>
<text transform="translate(798.8,593) rotate(-90)" font-size="9.850" fill="#646464" text-anchor="end">Sport Helmet Discount-2003</text>
<text transform="translate(851.9,593) rotate(-90)" font-size="9.850" fill="#646464" text-anchor="end">Touring-1000 Promotion</text>
<text transform="translate(904.9,593) rotate(-90)" font-size="9.850" fill="#646464" text-anchor="end">Touring-3000 Promotion</text>
<text transform="translate(958.0,593) rotate(-90)" font-size="9.850" fill="#646464" text-anchor="end">Volume Discount 11 to 14</text>
<line x1="294" y1="743.500" x2="986" y2="743.500" stroke="#e2e2e2" stroke-width="1"/>
<text x="301" y="767" font-size="11.500" font-weight="bold" fill="#47525c">Occupation</text>
<rect x="447" y="754" width="10" height="10" fill="#2490d2"/>
<text x="460" y="764" font-size="12" fill="#52606b">Clerical</text>
<rect x="556" y="754" width="10" height="10" fill="#cf3359"/>
<text x="569" y="764" font-size="12" fill="#52606b">Management</text>
<rect x="665" y="754" width="10" height="10" fill="#fbb936"/>
<text x="678" y="764" font-size="12" fill="#52606b">Manual</text>
<rect x="774" y="754" width="10" height="10" fill="#6ba855"/>
<text x="787" y="764" font-size="12" fill="#52606b">Professional</text>
<rect x="883" y="754" width="10" height="10" fill="#9a63cb"/>
<text x="896" y="764" font-size="12" fill="#52606b">Skilled Manual</text>
</svg></div>
<!--CHART-->
<!-- right panel -->
<div class="abs" style="left:986px;top:94px;width:215px;height:714px;background:#484848"></div>
<div class="abs" style="left:986px;top:124px;width:215px;height:1px;background:#3a3a3a"></div>
<div class="abs" style="left:978px;top:94px;width:8px;height:714px;background:linear-gradient(to right,rgba(0,0,0,0),rgba(0,0,0,.05) 40%,rgba(0,0,0,.28))"></div>
<div class="abs" style="left:1201px;top:94px;width:2px;height:714px;background:#414141"></div>
<div class="abs" style="left:1203px;top:94px;width:28px;height:714px;background:#484848"></div>
<div class="abs" style="left:1203px;top:94px;width:28px;height:107px;background:#565656"></div>
<div class="ptitle" style="left:994px;top:103px">Drop Zones</div>
<svg class="abs" style="left:1157px;top:102px" width="14" height="14"><path d="M7.500 1 L12.500 6 L11 6.700 L9.700 6.300 L7.800 8.200 L8 10.800 L6.800 11.300 L2.500 7 L3.200 5.800 L5.700 6 L7.600 4.100 L7 2.600 Z" fill="#d8d8d8"/><line x1="4.500" y1="9.300" x2="1" y2="12.800" stroke="#d8d8d8" stroke-width="1.200"/></svg>
<svg class="abs" style="left:1182px;top:102px" width="10" height="14"><path d="M2.500 2 L7.800 7 L2.500 12" fill="none" stroke="#d0d0d0" stroke-width="1.200"/></svg>
<svg class="abs" style="left:1210px;top:102px" width="10" height="14"><path d="M2.500 2 L7.800 7 L2.500 12" fill="none" stroke="#d0d0d0" stroke-width="1.200"/></svg>
<div class="abs" style="left:1221px;top:122px;font-size:11.800px;font-weight:bold;color:#dcdcdc;transform-origin:0 0;transform:rotate(90deg);white-space:nowrap;letter-spacing:-.1px">Drop Zones</div>
<div class="dz" style="top:136px;height:90px;background:#535353"><svg class="abs" style="left:6px;top:6px" width="16" height="14"><rect x="1.500" y="4.500" width="11" height="7" fill="none" stroke="#5ea7d8" stroke-width="1"/><path d="M5 4.500 V1.500 H9 V4.500" fill="none" stroke="#5ea7d8" stroke-width="1"/></svg><div class="dzt b">Categories</div><svg class="dots" width="3" height="15"><rect x="0" y="0" width="3" height="3" fill="#dedede"/><rect x="0" y="5.500" width="3" height="3" fill="#dedede"/><rect x="0" y="11" width="3" height="3" fill="#dedede"/></svg><div class="chip" style="top:30px;background:#2a6d9e;border:1px solid #1f5780"><svg class="abs" style="left:7px;top:6px" width="8" height="12"><g fill="#fff"><rect x="0" y="0" width="3" height="3"/><rect x="4.500" y="0" width="3" height="3"/><rect x="0" y="4.500" width="3" height="3"/><rect x="4.500" y="4.500" width="3" height="3"/><rect x="0" y="9" width="3" height="3"/><rect x="4.500" y="9" width="3" height="3"/></g></svg>Promotion<svg class="abs" style="right:5px;top:6px" width="10" height="10"><path d="M1 1 L9 9 M9 1 L1 9" stroke="#fff" stroke-width="1.300"/></svg></div></div>
<div class="dz" style="top:229px;height:90px;background:#535353"><svg class="abs" style="left:6px;top:7px" width="14" height="12"><rect x="1.500" y="5.500" width="2" height="4" fill="none" stroke="#d9a05a" stroke-width="1"/><rect x="5.500" y="3.500" width="2" height="6" fill="none" stroke="#d9a05a" stroke-width="1"/><rect x="9.500" y="1.500" width="2" height="8" fill="none" stroke="#d9a05a" stroke-width="1"/></svg><div class="dzt b">Values</div><svg class="dots" width="3" height="15"><rect x="0" y="0" width="3" height="3" fill="#dedede"/><rect x="0" y="5.500" width="3" height="3" fill="#dedede"/><rect x="0" y="11" width="3" height="3" fill="#dedede"/></svg><svg class="abs" style="left:0;top:20px" width="6" height="6"><path d="M0 1 L0 6 L5 6 Z" fill="#b0b0b0"/></svg><div class="abs" style="left:9px;top:30px;font-size:15px;color:#c8c8c8">y<span style="font-size:9px">1</span></div><div class="chip" style="left:27px;width:158px;top:30px;background:#d47a3a;border:1px solid #b4571e;padding-left:22px"><svg class="abs" style="left:4px;top:5px" width="12" height="11"><rect x="0" y="5" width="3" height="6" fill="#fff"/><rect x="4.300" y="2.500" width="3" height="8.500" fill="#fff"/><rect x="8.600" y="0" width="3" height="11" fill="#fff"/></svg>Cost<svg class="abs" style="right:5px;top:6px" width="10" height="10"><path d="M1 1 L9 9 M9 1 L1 9" stroke="#fff" stroke-width="1.300"/></svg></div></div>
<div class="dz" style="top:322px;height:28px;background:#494949"><svg class="abs" style="left:6px;top:7px" width="14" height="12"><path d="M1 2.500 H12 M1 5.500 H12 M1 8.500 H12 M3.500 0.500 V10.500" fill="none" stroke="#5fc2a0" stroke-width="1"/></svg><div class="dzt">Trellis Vertical</div><svg class="dots" width="3" height="15"><rect x="0" y="0" width="3" height="3" fill="#dedede"/><rect x="0" y="5.500" width="3" height="3" fill="#dedede"/><rect x="0" y="11" width="3" height="3" fill="#dedede"/></svg></div>
<div class="dz" style="top:353px;height:28px;background:#494949"><svg class="abs" style="left:6px;top:7px" width="14" height="12"><path d="M3.500 0.500 V11 M6.500 0.500 V11 M9.500 0.500 V11 M1 8.500 H12" fill="none" stroke="#5fc2a0" stroke-width="1"/></svg><div class="dzt">Trellis Horizontal</div><svg class="dots" width="3" height="15"><rect x="0" y="0" width="3" height="3" fill="#dedede"/><rect x="0" y="5.500" width="3" height="3" fill="#dedede"/><rect x="0" y="11" width="3" height="3" fill="#dedede"/></svg></div>
<div class="dz" style="top:384px;height:28px;background:#494949"><svg class="abs" style="left:6px;top:6px" width="14" height="14"><path d="M1.500 1.500 H12.500 L7.800 7 V12 L6.200 11 V7 Z" fill="none" stroke="#d07fd6" stroke-width="1"/></svg><div class="dzt">Filters</div><svg class="dots" width="3" height="15"><rect x="0" y="0" width="3" height="3" fill="#dedede"/><rect x="0" y="5.500" width="3" height="3" fill="#dedede"/><rect x="0" y="11" width="3" height="3" fill="#dedede"/></svg><svg class="abs" style="left:0;top:20px" width="6" height="6"><path d="M0 1 L0 6 L5 6 Z" fill="#b0b0b0"/></svg></div>
<div class="dz" style="top:415px;height:90px;background:#535353"><svg class="abs" style="left:6px;top:6px" width="14" height="14"><circle cx="7" cy="2" r="1.600" fill="#8f6fd0"/><circle cx="3" cy="4.500" r="1.600" fill="#e08a3c"/><circle cx="11" cy="4.500" r="1.600" fill="#4e8fd6"/><circle cx="4.500" cy="9" r="1.600" fill="#4fa58a"/><circle cx="9.500" cy="9" r="1.600" fill="#d85a3e"/></svg><div class="dzt b">Color</div><svg class="dots" width="3" height="15"><rect x="0" y="0" width="3" height="3" fill="#dedede"/><rect x="0" y="5.500" width="3" height="3" fill="#dedede"/><rect x="0" y="11" width="3" height="3" fill="#dedede"/></svg><svg class="abs" style="left:0;top:20px" width="6" height="6"><path d="M0 1 L0 6 L5 6 Z" fill="#b0b0b0"/></svg><div class="chip" style="top:30px;background:#2a6d9e;border:1px solid #1f5780"><svg class="abs" style="left:7px;top:6px" width="8" height="12"><g fill="#fff"><rect x="0" y="0" width="3" height="3"/><rect x="4.500" y="0" width="3" height="3"/><rect x="0" y="4.500" width="3" height="3"/><rect x="4.500" y="4.500" width="3" height="3"/><rect x="0" y="9" width="3" height="3"/><rect x="4.500" y="9" width="3" height="3"/></g></svg>Occupation<svg class="abs" style="right:5px;top:6px" width="10" height="10"><path d="M1 1 L9 9 M9 1 L1 9" stroke="#fff" stroke-width="1.300"/></svg></div></div>
<div class="dz" style="top:508px;height:28px;background:#494949"><svg class="abs" style="left:6px;top:5px" width="14" height="14"><rect x="1.500" y="3.800" width="5.300" height="8.700" fill="none" stroke="#d9a05a" stroke-width="1"/><rect x="6.800" y="8.500" width="4.700" height="4" fill="none" stroke="#d9a05a" stroke-width="1"/><rect x="10.300" y="2.300" width="2.200" height="2.200" fill="none" stroke="#d9a05a" stroke-width="1"/></svg><div class="dzt">Size</div><svg class="dots" width="3" height="15"><rect x="0" y="0" width="3" height="3" fill="#dedede"/><rect x="0" y="5.500" width="3" height="3" fill="#dedede"/><rect x="0" y="11" width="3" height="3" fill="#dedede"/></svg><svg class="abs" style="left:0;top:20px" width="6" height="6"><path d="M0 1 L0 6 L5 6 Z" fill="#b0b0b0"/></svg></div>
<div class="dz" style="top:539px;height:28px;background:#494949"><svg class="abs" style="left:6px;top:6px" width="14" height="14"><path d="M0.900 7.400 L9.900 1.400 L13 1.900 L12.300 6.600 L5.900 12.500 Z" fill="none" stroke="#e08a8a" stroke-width="1" stroke-linejoin="round"/><circle cx="6" cy="8" r="1" fill="#e08a8a"/></svg><div class="dzt">Labels</div><svg class="dots" width="3" height="15"><rect x="0" y="0" width="3" height="3" fill="#dedede"/><rect x="0" y="5.500" width="3" height="3" fill="#dedede"/><rect x="0" y="11" width="3" height="3" fill="#dedede"/></svg></div>
<div class="dz" style="top:570px;height:28px;background:#494949"><svg class="abs" style="left:6px;top:6px" width="14" height="14"><path d="M1.500 1.500 H12.500 V9 H10.500 V11.500 L7.500 9 H1.500 Z" fill="none" stroke="#e08a8a" stroke-width="1"/></svg><div class="dzt">Tooltip</div><svg class="dots" width="3" height="15"><rect x="0" y="0" width="3" height="3" fill="#dedede"/><rect x="0" y="5.500" width="3" height="3" fill="#dedede"/><rect x="0" y="11" width="3" height="3" fill="#dedede"/></svg></div>
<div class="dz" style="top:601px;height:28px;background:#494949"><svg class="abs" style="left:4px;top:5px" width="17" height="17"><circle cx="8.500" cy="8.500" r="7" fill="none" stroke="#a77fd6" stroke-width="1" stroke-dasharray="9 2"/><path d="M7 5.500 L11 8.500 L7 11.500 Z" fill="#a77fd6"/></svg><div class="dzt">Motion</div><svg class="dots" width="3" height="15"><rect x="0" y="0" width="3" height="3" fill="#dedede"/><rect x="0" y="5.500" width="3" height="3" fill="#dedede"/><rect x="0" y="11" width="3" height="3" fill="#dedede"/></svg></div>
<!--RIGHT-->
<!-- bottom bar -->
<div class="abs" style="left:0;top:808px;width:1231px;height:39px;background:#262626"></div>
<svg class="abs" style="left:18px;top:823px" width="15" height="12"><rect x="0.500" y="1" width="13.500" height="1.800" fill="#e0e0e0"/><rect x="0.500" y="5.200" width="13.500" height="1.800" fill="#e0e0e0"/><rect x="0.500" y="9.400" width="13.500" height="1.800" fill="#e0e0e0"/></svg>
<div class="abs" style="left:59px;top:816.500px;font-size:14px;font-weight:bold;color:#f0f0f0">*</div>
<svg class="abs" style="left:68px;top:820px" width="14" height="14"><rect x="1" y="2" width="2.800" height="11" fill="#3fae2a"/><rect x="5.200" y="6" width="2.800" height="7" fill="#3fae2a"/><rect x="9.400" y="2" width="2.800" height="11" fill="#3fae2a"/></svg>
<div class="abs" style="left:85px;top:819.500px;font-size:13px;font-weight:bold;color:#f4f4f4;letter-spacing:-.6px;white-space:nowrap">Discovery1</div>
<svg class="abs" style="left:154px;top:823px" width="12" height="8"><path d="M0.500 0.500 H10.500 L5.500 7 Z" fill="#f4f4f4"/></svg>
<div class="tab" style="left:176px;width:126px;border-bottom:3px solid #e0336f"></div>
<svg class="abs" style="left:192px;top:821px" width="12" height="12"><g fill="#e0336f"><rect x="0" y="0" width="5" height="5"/><rect x="6.500" y="0" width="5" height="5"/><rect x="0" y="6.500" width="5" height="5"/><rect x="6.500" y="6.500" width="5" height="5"/></g></svg>
<div class="abs" style="left:208px;top:819.500px;font-size:11.700px;color:#b9c2c9;white-space:nowrap">Presentation1</div>
<div class="tab" style="left:306px;width:119px;border-bottom:3px solid #1e9be8"></div>
<svg class="abs" style="left:322px;top:821px" width="13" height="12"><path d="M0.500 6 L12 0.500 L9 11 L6 8 L4.500 10.500 L4 7 Z" fill="#1e9be8"/></svg>
<div class="abs" style="left:338px;top:819.500px;font-size:11.700px;color:#b9c2c9;white-space:nowrap">Publication1</div>
<div class="tab" style="left:428px;width:97px;border-bottom:3px solid #f07a14"></div>
<svg class="abs" style="left:444px;top:820px" width="13" height="14"><text x="0" y="11" font-family="Liberation Serif" font-style="italic" font-weight="bold" font-size="12" fill="#f07a14">fx</text></svg>
<div class="abs" style="left:460px;top:819.500px;font-size:11.700px;color:#b9c2c9;white-space:nowrap">Fx Logic</div>
<div class="tab" style="left:528px;width:84px;border-bottom:3px solid #f5b81c"></div>
<svg class="abs" style="left:545px;top:821px" width="11" height="12"><ellipse cx="5.500" cy="2.500" rx="5" ry="2.300" fill="#f5b81c"/><path d="M0.500 4.500 Q5.500 8 10.500 4.500 V6.500 Q5.500 10 0.500 6.500 Z M0.500 8 Q5.500 11.500 10.500 8 V9.500 Q5.500 13 0.500 9.500 Z" fill="#f5b81c"/></svg>
<div class="abs" style="left:560px;top:819.500px;font-size:11.700px;color:#b9c2c9;white-space:nowrap">tester</div>
<div class="tab" style="left:615px;width:116px;border-bottom:3px solid #c95fd6"></div>
<svg class="abs" style="left:631px;top:821px" width="13" height="12"><rect x="0" y="0" width="12.500" height="11.500" fill="#c95fd6"/><path d="M1.500 10 L5 5.500 L7.500 8.500 L9 7 L11 10 Z" fill="#3a2a40"/><circle cx="9" cy="3.500" r="1.300" fill="#3a2a40"/></svg>
<div class="abs" style="left:647px;top:819.500px;font-size:11.700px;color:#b9c2c9;white-space:nowrap">Illustration1</div>
<svg class="abs" style="left:744px;top:820px" width="14" height="14"><path d="M7 1 V13 M1 7 H13" stroke="#f0f0f0" stroke-width="1.800"/></svg>
<svg class="abs" style="left:1106px;top:819px" width="22" height="22"><g transform="translate(7.500,6.500) rotate(-45)" fill="#c4c4c4"><rect x="-4.200" y="-3.200" width="8.400" height="3.200" rx="1.200"/><rect x="-2.700" y="-0.500" width="5.400" height="4.500"/><path d="M-5.800 5.700 Q-5.800 3.600 0 3.600 Q5.800 3.600 5.800 5.700 Q5.800 7.600 0 7.600 Q-5.800 7.600 -5.800 5.700 Z"/><path d="M-1.100 7.200 L1.100 7.200 L0 16.500 Z"/></g></svg>
<svg class="abs" style="left:1133px;top:826px" width="8" height="6"><path d="M0.500 0.500 H6.500 L3.500 5 Z" fill="#c4c4c4"/></svg>
<svg class="abs" style="left:1149.500px;top:821px" width="17" height="17"><path d="M9.11 7.71 L9.27 7.75 L9.43 7.82 L9.58 7.92 L9.72 8.06 L9.85 8.22 L9.95 8.40 L10.02 8.61 L10.06 8.84 L10.07 9.09 L10.04 9.34 L9.96 9.59 L9.85 9.84 L9.69 10.08 L9.49 10.29 L9.26 10.49 L8.99 10.65 L8.69 10.77 L8.36 10.85 L8.02 10.88 L7.66 10.85 L7.30 10.78 L6.95 10.65 L6.61 10.46 L6.29 10.22 L6.01 9.93 L5.76 9.59 L5.56 9.22 L5.41 8.80 L5.33 8.36 L5.31 7.90 L5.35 7.43 L5.47 6.97 L5.65 6.51 L5.90 6.08 L6.22 5.68 L6.61 5.32 L7.04 5.02 L7.53 4.77 L8.06 4.60 L8.61 4.50 L9.19 4.48 L9.77 4.55 L10.35 4.70 L10.91 4.94 L11.43 5.26 L11.92 5.65 L12.35 6.12 L12.72 6.66 L13.01 7.25 L13.21 7.89 L13.32 8.56 L13.34 9.25 L13.26 9.95 L13.08 10.64 L12.79 11.30 L12.41 11.93 L11.94 12.50 L11.38 13.01 L10.75 13.44 L10.05 13.78 L9.30 14.02 L8.52 14.15 L7.71 14.17 L6.90 14.07 L6.10 13.86 L5.33 13.53 L4.60 13.09 L3.94 12.55 L3.35 11.91 L2.85 11.18 L2.46 10.38 L2.18 9.52 L2.03 8.62 L2.00 7.70 L2.10 6.77 L2.34 5.86 L2.71 4.98 L3.21 4.15 L3.82 3.39 L4.55 2.72" fill="none" stroke="#c4c4c4" stroke-width="1.700" stroke-linecap="round"/></svg>
<svg class="abs" style="left:1177px;top:821px" width="17" height="17"><circle cx="7.500" cy="7.500" r="5.800" fill="none" stroke="#c4c4c4" stroke-width="1.500"/><line x1="11.800" y1="12" x2="15.500" y2="16" stroke="#c4c4c4" stroke-width="1.700"/></svg>
<svg class="abs" style="left:1206px;top:819px" width="17" height="18"><circle cx="8" cy="10.500" r="6" fill="none" stroke="#c4c4c4" stroke-width="1.400"/><path d="M8 7 V10.500 H11" fill="none" stroke="#c4c4c4" stroke-width="1.300"/><path d="M6 2 H10 M8 2 V4.500 M13 4 L14.500 5.500" stroke="#c4c4c4" stroke-width="1.300"/></svg>
<!--BOTTOM-->
<!-- bottom green line + discovery tab outline -->
<svg class="abs" style="left:0;top:806px" width="1231" height="41"><path d="M0 5.500 H51.500 V35.500 H171.500 V5.500 H1231" fill="none" stroke="#3bb514" stroke-width="3"/></svg>
<!-- red rectangle -->
<div class="abs" style="left:24px;top:83px;width:246px;height:726px;border:3px solid #f00"></div>
<!-- green rectangle -->
<div class="abs" style="left:1133px;top:94px;width:65px;height:32px;border:3px solid #08f408"></div>
<!-- purple rectangle -->
<div class="abs" style="left:1200px;top:96px;width:31px;height:30px;border:3px solid #c866fb"></div>
<!-- arrows -->
<svg class="abs" style="left:0;top:0" width="260" height="200">
 <path d="M10.500 24.500 V79" stroke="#f5a90d" stroke-width="5.200" stroke-linecap="round"/><path d="M3 78 H17.800 L10.400 93 Z" fill="#f5a90d"/>
 <path d="M131 164.500 L116 126" stroke="#15f015" stroke-width="5.600" stroke-linecap="round"/><path d="M111.500 115.500 L124.500 123.500 L110.500 130.500 Z" fill="#15f015"/>
 <path d="M138.500 165.500 L153 128" stroke="#15f015" stroke-width="5.600" stroke-linecap="round"/><path d="M158.500 116.500 L159.500 131.500 L145.500 125 Z" fill="#15f015"/>
 <path d="M233 174 V132" stroke="#ff2fc3" stroke-width="5.400" stroke-linecap="round"/><path d="M233 119.500 L241.500 134.500 H225 Z" fill="#ff2fc3"/>
</svg>

</body></html>
